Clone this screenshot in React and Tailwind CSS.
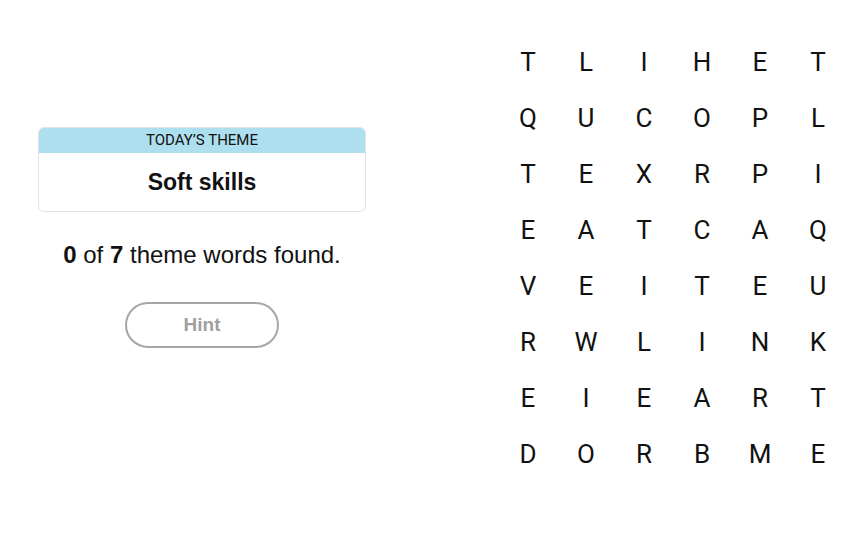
export default function App() {
  const rows = [
    "TLIHET",
    "QUCOPL",
    "TEXRPI",
    "EATCAQ",
    "VEITEU",
    "RWLINK",
    "EIEART",
    "DORBME",
  ];
  return (
    <div className="w-[865px] h-[536px] bg-white flex" style={{ fontFamily: '"Liberation Sans", Arial, sans-serif' }}>
      <div className="ml-[38px] w-[328px] pt-[127px] flex flex-col items-center">
        <div className="w-full rounded-[6px] border border-[#e2e2e2] overflow-hidden">
          <div className="h-[25px] bg-[#aedfee] flex items-center justify-center text-[15px] font-normal text-[#111]" style={{ fontFamily: 'Roboto, "Liberation Sans", sans-serif' }}>
            TODAY’S THEME
          </div>
          <div className="h-[58px] flex items-center justify-center text-[23px] font-bold text-[#111]">
            Soft skills
          </div>
        </div>
        <div className="mt-[29px] text-[24px] leading-[28px] text-[#111]">
          <span className="font-bold">0</span> of <span className="font-bold">7</span> theme words found.
        </div>
        <div className="mt-[33px] w-[154px] h-[46px] rounded-full border-2 border-[#a6a6a6] flex items-center justify-center text-[19px] font-bold text-[#a0a0a0]">
          Hint
        </div>
      </div>
      <div className="ml-[133px] pt-[34px]">
        <div className="grid grid-cols-6" style={{ fontFamily: 'Roboto, "Liberation Sans", sans-serif' }}>
          {rows.map((r, i) =>
            r.split("").map((c, j) => (
              <div key={i + "-" + j} className="w-[58px] h-[56px] flex items-center justify-center text-[26px] text-[#111]">
                {c}
              </div>
            ))
          )}
        </div>
      </div>
    </div>
  );
}
